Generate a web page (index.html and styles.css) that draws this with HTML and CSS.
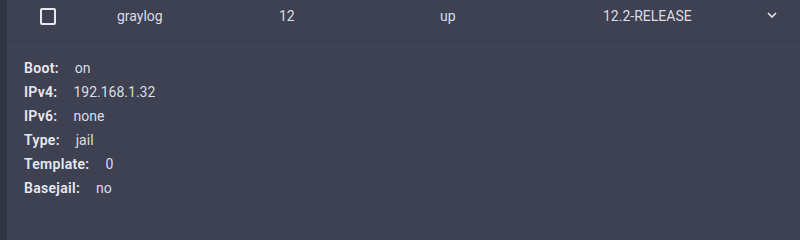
FILE: index.html
```html
<!DOCTYPE html>
<html>
<head>
<meta charset="utf-8">
<link rel="stylesheet" href="styles.css">
</head>
<body>
<div class="page">
  <div class="strip"></div>
  <div class="main">
    <div class="row">
      <div class="cell cell-check"><span class="checkbox"></span></div>
      <div class="cell cell-name">graylog</div>
      <div class="cell cell-num">12</div>
      <div class="cell cell-state">up</div>
      <div class="cell cell-release">12.2-RELEASE</div>
      <div class="cell cell-toggle">
        <svg class="chevron" width="10" height="6" viewBox="0 0 10 6"><path d="M1 1 L5 5 L9 1" fill="none" stroke="#e6e7ee" stroke-width="1.6"/></svg>
      </div>
    </div>
    <div class="details">
      <div class="line"><span class="label">Boot:</span><span class="value">on</span></div>
      <div class="line"><span class="label">IPv4:</span><span class="value">192.168.1.32</span></div>
      <div class="line"><span class="label">IPv6:</span><span class="value">none</span></div>
      <div class="line"><span class="label">Type:</span><span class="value">jail</span></div>
      <div class="line"><span class="label">Template:</span><span class="value">0</span></div>
      <div class="line"><span class="label">Basejail:</span><span class="value">no</span></div>
    </div>
  </div>
</div>
</body>
</html>
```
FILE: styles.css
```css
html, body {
  margin: 0;
  padding: 0;
  background: #3d4152;
}
body {
  font-family: Roboto, "Liberation Sans", sans-serif;
  font-size: 14px;
  color: #dcdde4;
}
.page {
  display: flex;
  width: 800px;
  min-height: 100vh;
}
.strip {
  width: 7px;
  flex: 0 0 7px;
  background: #323644;
}
.main {
  flex: 1;
  display: flex;
  flex-direction: column;
}
.row {
  display: flex;
  height: 41px;
  box-sizing: border-box;
  border-bottom: 1px solid #393d4d;
  line-height: 33px;
}
.cell {
  flex: 0 0 auto;
}
.cell-check {
  width: 110px;
  display: flex;
  align-items: center;
  height: 33px;
  padding-left: 33px;
  box-sizing: border-box;
}
.checkbox {
  width: 16px;
  height: 17px;
  box-sizing: border-box;
  border: 2px solid #e6e7ee;
  border-radius: 2px;
}
.cell-name { width: 162px; }
.cell-num { width: 161px; }
.cell-state { width: 163px; }
.cell-release { width: 164px; }
.cell-toggle {
  display: flex;
  align-items: center;
  height: 30px;
}
.chevron { display: block; }
.details {
  padding: 15px 0 0 17px;
  line-height: 24px;
}
.line {
  display: flex;
}
.label {
  font-weight: 600;
  letter-spacing: 0.3px;
  color: #e8e9ef;
}
.value {
  margin-left: 16px;
}
```
